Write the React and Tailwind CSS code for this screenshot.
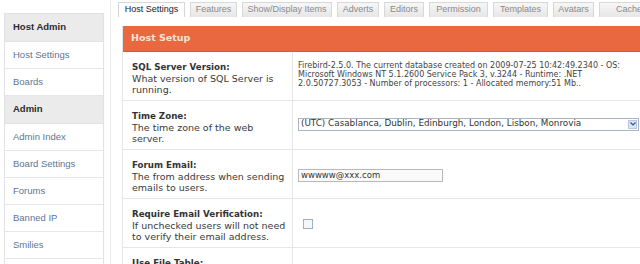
import React from 'react';

const navItems = [
  { label: 'Host Admin', header: true },
  { label: 'Host Settings' },
  { label: 'Boards' },
  { label: 'Admin', header: true },
  { label: 'Admin Index' },
  { label: 'Board Settings' },
  { label: 'Forums' },
  { label: 'Banned IP' },
  { label: 'Smilies' },
  { label: 'Attachments' },
];

const tabs = [
  { label: 'Host Settings', w: 'w-[67px]', active: true },
  { label: 'Features', w: 'w-[47px]' },
  { label: 'Show/Display Items', w: 'w-[90px]' },
  { label: 'Adverts', w: 'w-[42px]' },
  { label: 'Editors', w: 'w-[40px]' },
  { label: 'Permission', w: 'w-[59px]' },
  { label: 'Templates', w: 'w-[55px]' },
  { label: 'Avatars', w: 'w-[41px]' },
  { label: 'Cache', w: 'w-[60px]' },
];

function Row({ title, desc, children }) {
  return (
    <div className="flex h-[49px] border-b border-[#e6e6e6] shrink-0">
      <div className="w-[170px] shrink-0 border-r border-[#e6e6e6] pl-[9px] pt-[10px] leading-[11px] text-[9.5px] text-[#3a3a3a]">
        <div className="font-bold text-[8.7px] text-[#333]">{title}</div>
        <div>{desc}</div>
      </div>
      <div className="flex-1 pl-[5px] flex items-center">{children}</div>
    </div>
  );
}

export default function App() {
  return (
    <div className="w-[640px] h-[264px] overflow-hidden bg-white flex" style={{ fontFamily: '"DejaVu Sans", Verdana, sans-serif' }}>
      {/* sidebar */}
      <div className="w-[111px] shrink-0 border-r border-[#ececec] pt-[13px] pl-[4px]">
        <div className="w-[100px] border border-[#e2e2e2] border-b-0 font-['Liberation_Sans',Arial,sans-serif] text-[9.5px]">
          {navItems.map((it) =>
            it.header ? (
              <div key={it.label} className="h-[28px] flex items-center pl-[8px] bg-[#ebebeb] font-bold text-[#2b2b2b] border-b border-[#e2e2e2]">
                {it.label}
              </div>
            ) : (
              <div key={it.label} className="h-[27px] flex items-center pl-[8px] text-[#5f7592] border-b border-[#e6e6e6]">
                {it.label}
              </div>
            )
          )}
        </div>
      </div>

      {/* main */}
      <div className="flex-1 min-w-0 flex flex-col">
        <div className="flex gap-[5px] pl-[7px] pt-[2px] h-[17px] font-['Liberation_Sans',Arial,sans-serif] text-[9px] shrink-0">
          {tabs.map((t) => (
            <div
              key={t.label}
              className={`${t.w} shrink-0 h-[15px] flex items-center justify-center border border-b-0 whitespace-nowrap ${
                t.active
                  ? 'bg-white border-[#d6d6d6] text-[#1a1a1a]'
                  : 'bg-gradient-to-b from-[#f7f7f7] to-[#e6e6e6] border-[#d8d8d8] text-[#8a8a8a]'
              }`}
            >
              {t.label}
            </div>
          ))}
        </div>

        <div className="ml-[11px] mt-[9px] flex-1 flex flex-col border-l border-[#e6e6e6]">
          <div className="h-[26px] shrink-0 bg-[#ea6840] border-b border-[#d9573a] flex items-center pl-[8px] text-[9.5px] font-bold text-[#fde2d4]">
            Host Setup
          </div>

          <Row title="SQL Server Version:" desc={<>What version of SQL Server is<br />running.</>}>
            <div className="text-[8px] leading-[9px] text-[#444] -mt-[4px] whitespace-nowrap">
              Firebird-2.5.0. The current database created on 2009-07-25 10:42:49.2340 - OS:<br />
              Microsoft Windows NT 5.1.2600 Service Pack 3, v.3244 - Runtime: .NET<br />
              2.0.50727.3053 - Number of processors: 1 - Allocated memory:51 Mb..
            </div>
          </Row>

          <Row title="Time Zone:" desc={<>The time zone of the web<br />server.</>}>
            <div className="w-[341px] h-[13px] border border-[#a9b4c4] flex items-center justify-between pl-[2px] pr-[1px] text-[8.8px] text-[#333] -mt-[2px]">
              <span className="whitespace-nowrap">(UTC) Casablanca, Dublin, Edinburgh, London, Lisbon, Monrovia</span>
              <span className="w-[9px] h-[9px] bg-[#d9e4f5] border border-[#b7c6e0] flex items-center justify-center">
                <svg width="6" height="4" viewBox="0 0 6 4"><path d="M0.5 0.5 L3 3 L5.5 0.5" fill="none" stroke="#3a5b8c" strokeWidth="1.2" /></svg>
              </span>
            </div>
          </Row>

          <Row title="Forum Email:" desc={<>The from address when sending<br />emails to users.</>}>
            <div className="w-[145px] h-[13px] border border-[#b8b8b8] bg-[#fafafa] flex items-center pl-[2px] text-[8.5px] text-[#333] mt-[2px]">
              wwwww@xxx.com
            </div>
          </Row>

          <Row title="Require Email Verification:" desc={<>If unchecked users will not need<br />to verify their email address.</>}>
            <div className="w-[10px] h-[10px] border border-[#9fb0c6] bg-[#f4f6f9] ml-[5px] mt-[2px]" />
          </Row>

          <Row title="Use File Table:" desc={<>Store files in the database.</>}>
            <div />
          </Row>
        </div>
      </div>
    </div>
  );
}
